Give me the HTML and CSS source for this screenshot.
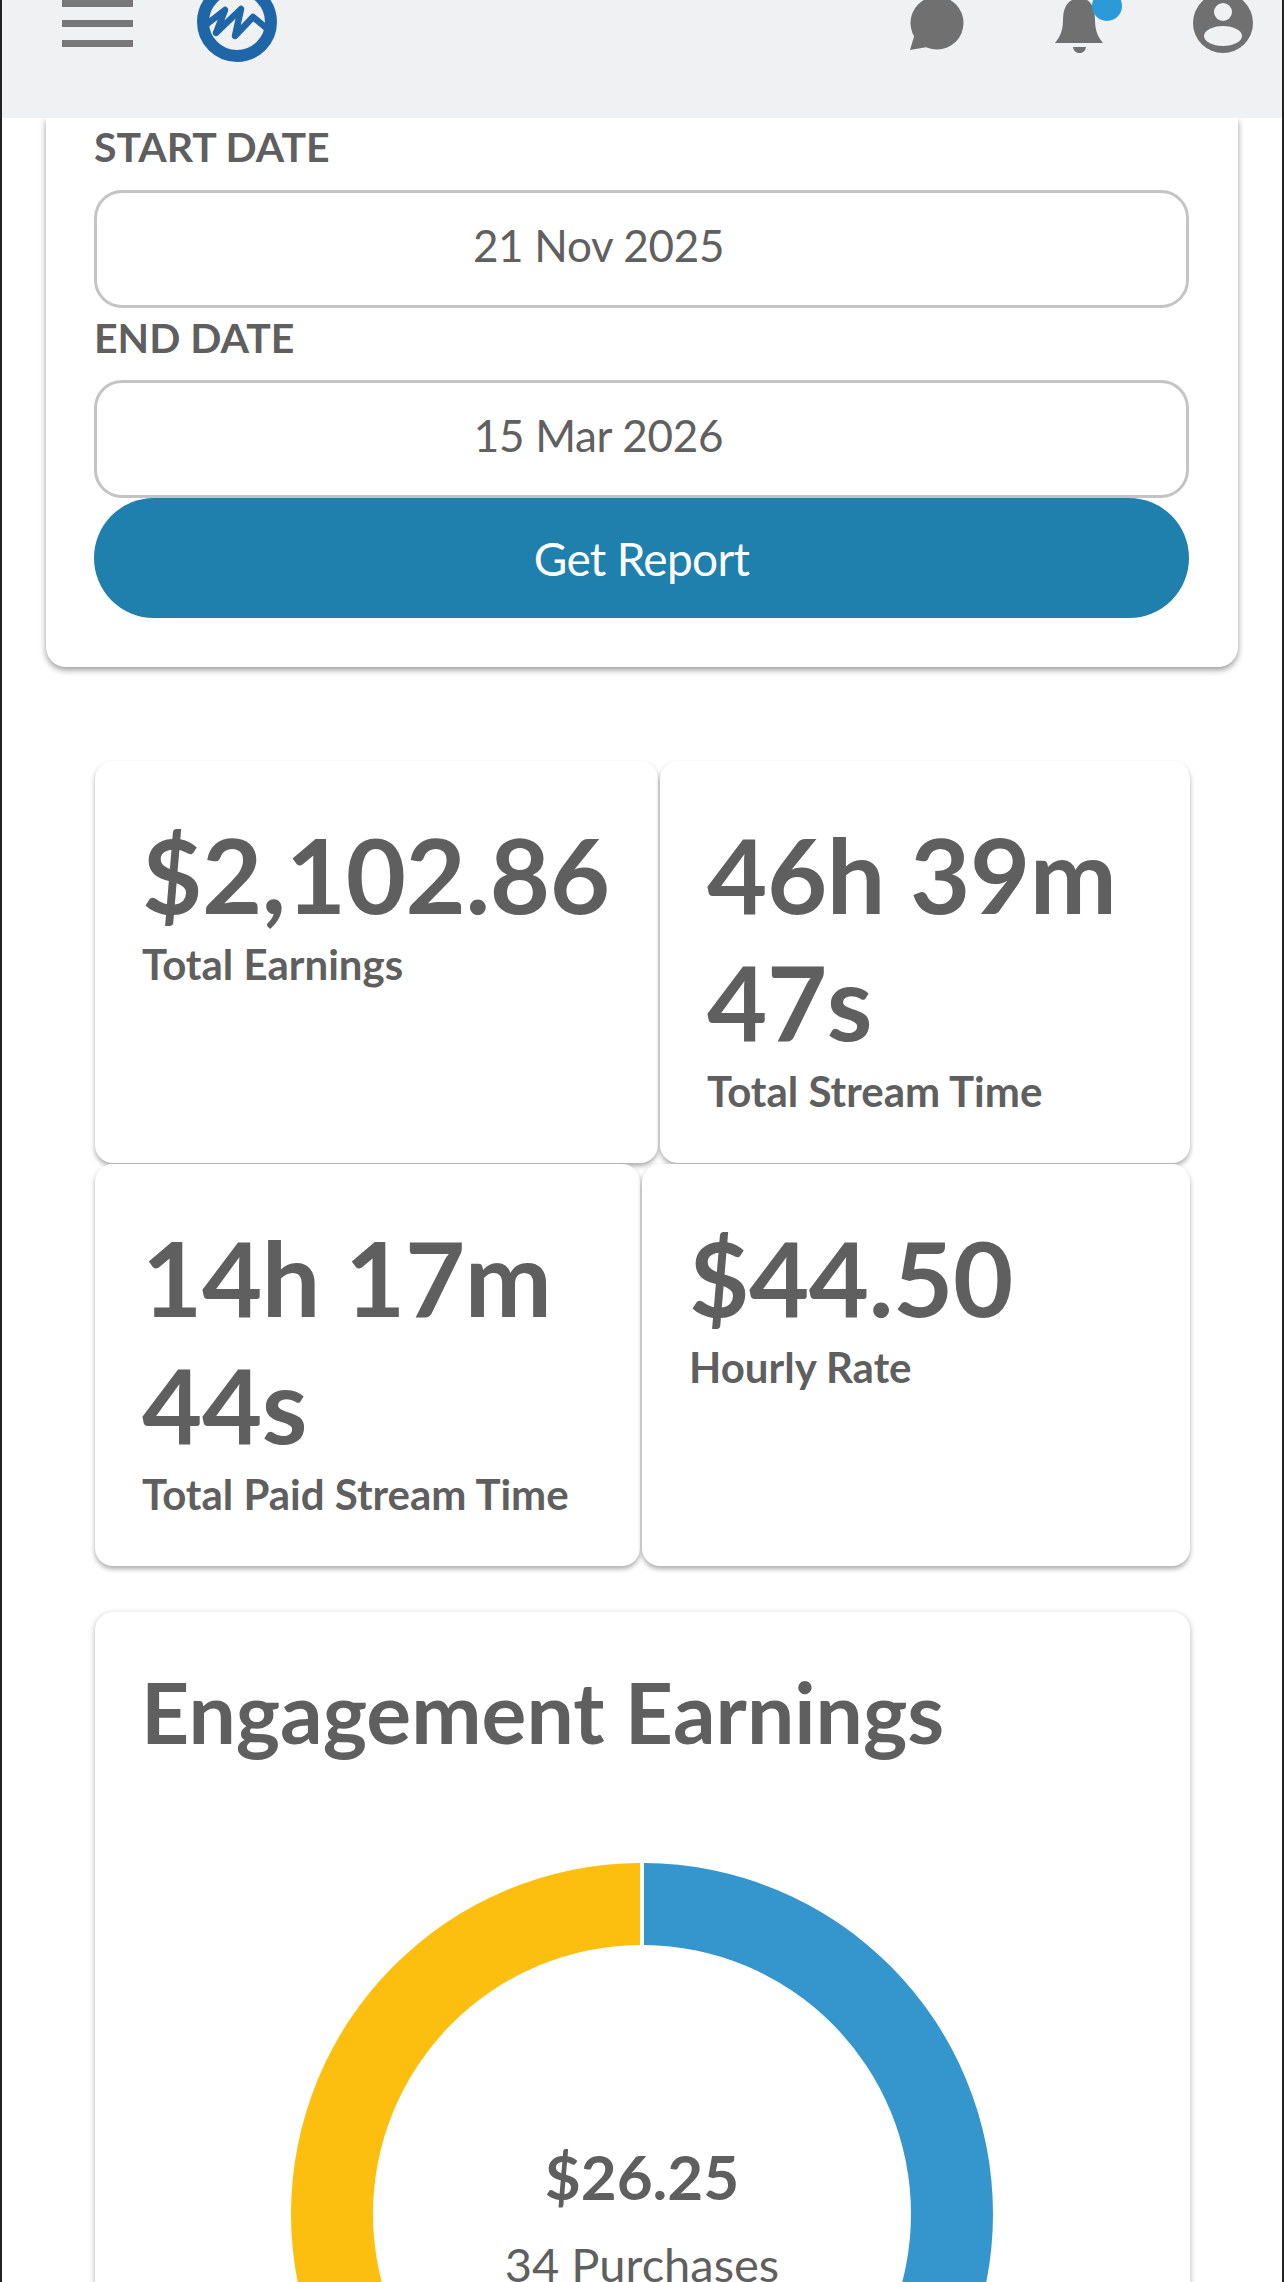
FILE: index.html
```html
<!DOCTYPE html>
<html lang="en">
<head>
    <meta charset="UTF-8">
    <title>Earnings Report</title>
    <link rel="stylesheet" href="styles.css">
</head>
<body>
    <div class="page">
        <header class="topbar">
            <div class="menu"><span></span><span></span><span></span></div>
            <svg class="logo" viewBox="0 0 84 64" width="84" height="64">
                <circle cx="42" cy="22" r="34" fill="none" stroke="#1f66a8" stroke-width="12"/>
                <path d="M12 24 L30 10 L21 33 L46 9 L40 36 L58 17 L75 31" fill="none" stroke="#1f66a8" stroke-width="6.5" stroke-linejoin="round"/>
            </svg>
            <div class="top-icons">
                <svg class="chat" viewBox="0 0 56 54" width="56" height="54">
                    <circle cx="28" cy="23" r="26.5" fill="#707070"/>
                    <path d="M7 30 L1 50 L24 46 Z" fill="#707070"/>
                </svg>
                <svg class="bell" viewBox="0 0 84 54" width="84" height="54">
                    <path d="M19 0 C13 3 10 10 10 20 C10 32 6 38 2 43 L50 43 C46 38 42 32 42 20 C42 10 39 3 34 0 Z" fill="#707070"/>
                    <path d="M20 47 L33 47 C32 55 21 55 20 47 Z" fill="#707070"/>
                    <circle cx="54" cy="6" r="15" fill="#2a9ad8"/>
                </svg>
                <svg class="profile" viewBox="0 0 60 54" width="60" height="54">
                    <circle cx="30" cy="23" r="30" fill="#707070"/>
                    <circle cx="30" cy="12" r="9" fill="#eff1f3"/>
                    <ellipse cx="30" cy="36" rx="19" ry="10" fill="#eff1f3"/>
                </svg>
            </div>
        </header>

        <section class="filter-card">
            <div class="field-label">START DATE</div>
            <div class="date-input">21 Nov 2025</div>
            <div class="field-label">END DATE</div>
            <div class="date-input">15 Mar 2026</div>
            <button class="report-btn">Get Report</button>
        </section>

        <section class="stats">
            <div class="stat-row">
                <div class="stat-card w-563">
                    <div class="stat-value">$2,102.86</div>
                    <div class="stat-label">Total Earnings</div>
                </div>
                <div class="stat-card w-fill">
                    <div class="stat-value">46h 39m 47s</div>
                    <div class="stat-label">Total Stream Time</div>
                </div>
            </div>
            <div class="stat-row">
                <div class="stat-card w-546">
                    <div class="stat-value">14h 17m 44s</div>
                    <div class="stat-label">Total Paid Stream Time</div>
                </div>
                <div class="stat-card w-fill">
                    <div class="stat-value">$44.50</div>
                    <div class="stat-label">Hourly Rate</div>
                </div>
            </div>
        </section>

        <section class="engagement-card">
            <h2>Engagement Earnings</h2>
            <div class="donut">
                <svg viewBox="0 0 702 702" width="702" height="702">
                    <path d="M353 0 A351 351 0 0 1 702 351 A351 351 0 0 1 353 702 L353 620 A269 269 0 0 0 620 351 A269 269 0 0 0 353 82 Z" fill="#3496cd"/>
                    <path d="M349 0 A351 351 0 0 0 0 351 A351 351 0 0 0 349 702 L349 620 A269 269 0 0 1 82 351 A269 269 0 0 1 349 82 Z" fill="#fdbf0f"/>
                </svg>
                <div class="donut-text">
                    <div class="donut-amount">$26.25</div>
                    <div class="donut-count">34 Purchases</div>
                </div>
            </div>
        </section>
    </div>
</body>
</html>
```

FILE: styles.css
```css
html,
body {
    margin: 0;
    padding: 0;
    height: 2282px;
    overflow: hidden;
}

body {
    font-family: Lato, "Open Sans", sans-serif;
    background: #ffffff;
    color: #5f5f5f;
}

.page {
    height: 2282px;
    overflow: hidden;
    border-left: 2px solid #222222;
    border-right: 2px solid #222222;
}

/* Top bar */
.topbar {
    position: relative;
    z-index: 2;
    display: flex;
    align-items: flex-start;
    height: 118px;
    background: #eff1f3;
}

.menu {
    display: flex;
    flex-direction: column;
    gap: 13px;
    width: 71px;
    margin-left: 60px;
}

.menu span {
    height: 7px;
    background: #777777;
}

.logo {
    margin-left: 62px;
}

.top-icons {
    display: flex;
    align-items: flex-start;
    margin-left: auto;
    margin-right: 29px;
}

.chat {
    margin-right: 88px;
}

.bell {
    margin-right: 56px;
}

/* Date filter */
.filter-card {
    margin: 0 44px;
    height: 549px;
    padding: 0 49px 0 48px;
    box-sizing: border-box;
    background: #ffffff;
    border-radius: 0 0 20px 20px;
    box-shadow: 0 3px 6px rgba(0, 0, 0, 0.4);
}

.field-label {
    height: 72px;
    font-size: 41px;
    line-height: 60px;
    font-weight: 700;
}

.field-label:first-child {
    line-height: 57px;
}

.date-input {
    box-sizing: border-box;
    height: 118px;
    padding: 0 86px 9px 0;
    display: flex;
    justify-content: center;
    align-items: center;
    border: 3px solid #c4c4c4;
    border-radius: 28px;
    font-size: 44px;
    letter-spacing: -0.3px;
    color: #606060;
}

.report-btn {
    display: block;
    width: 100%;
    height: 120px;
    border: none;
    border-radius: 60px;
    background: #1f7fad;
    color: #ffffff;
    font-family: inherit;
    font-size: 46px;
    letter-spacing: -0.7px;
}

/* Stat cards */
.stats {
    margin: 94px 92px 0 93px;
}

.stat-row {
    display: flex;
    gap: 2px;
    margin-bottom: 1px;
}

.stat-card {
    box-sizing: border-box;
    height: 402px;
    padding: 49px 30px 0 47px;
    background: #ffffff;
    border-radius: 18px;
    box-shadow: 0 3px 5px rgba(0, 0, 0, 0.33);
}

.w-563 {
    width: 563px;
}

.w-546 {
    width: 545px;
}

.w-fill {
    flex: 1;
}

.stat-value {
    font-size: 104px;
    line-height: 127px;
    font-weight: 700;
    letter-spacing: -0.4px;
}

.stat-label {
    margin-top: 2px;
    font-size: 42px;
    line-height: 50px;
    font-weight: 700;
}

/* Engagement */
.engagement-card {
    margin: 46px 92px 0 93px;
    height: 760px;
    padding: 45px 46px 0;
    background: #ffffff;
    border-radius: 18px;
    box-shadow: 0 2px 6px rgba(0, 0, 0, 0.3);
}

.engagement-card h2 {
    margin: 0;
    font-size: 84px;
    line-height: 110px;
    font-weight: 700;
}

.donut {
    position: relative;
    width: 702px;
    margin: 96px 0 0 150px;
}

.donut svg {
    display: block;
}

.donut-text {
    position: absolute;
    top: 277px;
    left: 0;
    right: 0;
    text-align: center;
}

.donut-amount {
    font-size: 62px;
    line-height: 72px;
    font-weight: 700;
}

.donut-count {
    margin-top: 22px;
    font-size: 47px;
    line-height: 60px;
}
```
